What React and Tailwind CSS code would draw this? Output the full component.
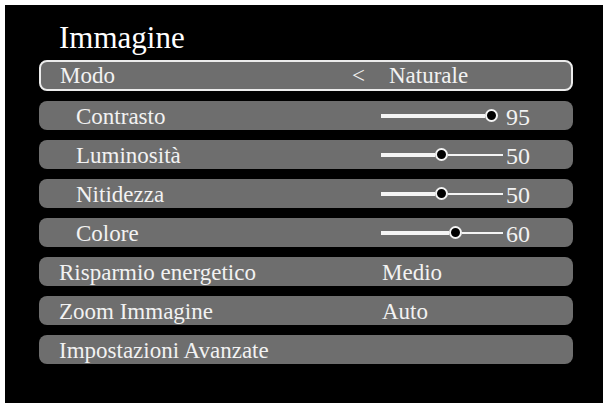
const sliders = [
  { label: "Contrasto", value: 95, knob: 110 },
  { label: "Luminosità", value: 50, knob: 60 },
  { label: "Nitidezza", value: 50, knob: 60 },
  { label: "Colore", value: 60, knob: 74 },
];

const options = [
  { label: "Risparmio energetico", value: "Medio" },
  { label: "Zoom Immagine", value: "Auto" },
  { label: "Impostazioni Avanzate", value: "" },
];

// thin track is hidden when the knob sits at the end
const Slider = ({ knob }) => (
  <div className="flex items-center w-[122px] h-[14px]">
    <div className="h-[4px] bg-[#f4f4f4] shrink-0" style={{ width: knob - 6 }} />
    <div className="w-[13px] h-[13px] shrink-0 rounded-full bg-black border-[2.5px] border-[#f4f4f4]" />
    {knob < 100 && <div className="h-[2px] bg-[#f4f4f4] flex-1" />}
  </div>
);

export default function App() {
  return (
    <div
      className="w-[606px] h-[406px] bg-white pt-[5px] pl-[5px]"
      style={{ fontFamily: '"Liberation Serif", "Times New Roman", serif' }}
    >
      <div className="w-[598px] h-[398px] bg-black pt-[15px] pl-[34px] text-[#f2f2f2]">
        <h1 className="text-[31px] leading-[36px] pl-[20px] text-white">Immagine</h1>

        <div className="mt-[4px] w-[534px] flex flex-col gap-[10px]">
          {/* Modo */}
          <div className="h-[31px] rounded-[8px] bg-[#6e6e6e] border-2 border-[#ececec] flex items-center text-[23px] leading-none">
            <div className="w-[311px] pl-[19px]">Modo</div>
            <div className="w-[37px]">&lt;</div>
            <div>Naturale</div>
          </div>

          {sliders.map((s) => (
            <div
              key={s.label}
              className="h-[29px] rounded-[8px] bg-[#6e6e6e] flex items-center text-[23px] leading-none"
            >
              <div className="w-[342px] pl-[37px] pt-[2px]">{s.label}</div>
              <Slider knob={s.knob} />
              <div className="ml-[3px] text-[24px] pt-[3px]">{s.value}</div>
            </div>
          ))}

          {options.map((o) => (
            <div
              key={o.label}
              className="h-[29px] rounded-[8px] bg-[#6e6e6e] flex items-center text-[23px] leading-none"
            >
              <div className="w-[343px] pl-[20px] pt-[1px]">{o.label}</div>
              <div className="pt-[1px]">{o.value}</div>
            </div>
          ))}
        </div>
      </div>
    </div>
  );
}
